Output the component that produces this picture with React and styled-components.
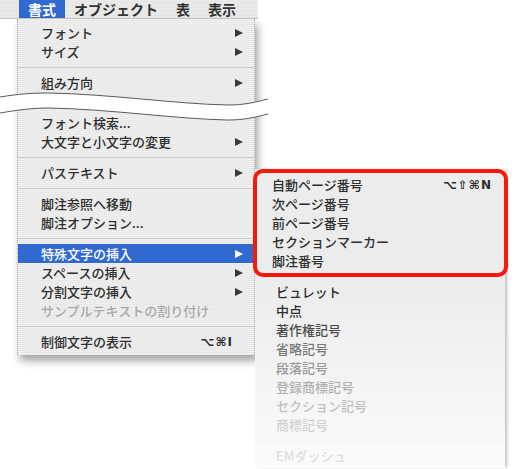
import React from "react";
import styled, { createGlobalStyle } from "styled-components";

const GlobalStyle = createGlobalStyle`
  html, body {
    margin: 0;
    padding: 0;
    background: #fff;
  }
  body {
    font-family: "Noto Sans CJK JP", "Noto Sans", sans-serif;
    color: #2e2e2e;
  }
`;

const barItems = ["書式", "オブジェクト", "表", "表示"];

const mainTop = [
  { label: "フォント", arrow: true },
  { label: "サイズ", arrow: true },
  { sep: true },
  { label: "組み方向", arrow: true },
];

const mainBottom = [
  { label: "フォント検索..." },
  { label: "大文字と小文字の変更", arrow: true },
  { sep: true },
  { label: "パステキスト", arrow: true },
  { sep: true },
  { label: "脚注参照へ移動" },
  { label: "脚注オプション..." },
  { sep: true },
  { label: "特殊文字の挿入", arrow: true, active: true },
  { label: "スペースの挿入", arrow: true },
  { label: "分割文字の挿入", arrow: true },
  { label: "サンプルテキストの割り付け", disabled: true },
  { sep: true },
  { label: "制御文字の表示", shortcut: "⌥⌘I" },
];

const markedItems = [
  { label: "自動ページ番号", shortcut: "⌥⇧⌘N" },
  { label: "次ページ番号" },
  { label: "前ページ番号" },
  { label: "セクションマーカー" },
  { label: "脚注番号" },
];

const symbolItems = [
  { label: "ビュレット", fade: 1 },
  { label: "中点", fade: 1 },
  { label: "著作権記号", fade: 0.85 },
  { label: "省略記号", fade: 0.62 },
  { label: "段落記号", fade: 0.46 },
  { label: "登録商標記号", fade: 0.34 },
  { label: "セクション記号", fade: 0.27 },
  { label: "商標記号", fade: 0.19 },
  { sep: true, fade: 0.15 },
  { label: "EMダッシュ", fade: 0.13 },
];

const Page = styled.div`
  width: 519px;
  height: 469px;
  overflow: hidden;
  background: #fff;
`;

const MenuBar = styled.div`
  display: flex;
  width: 258px;
  height: 19px;
  padding-left: 19px;
  box-sizing: border-box;
  background: repeating-linear-gradient(to bottom, #ececec 0 1px, #e4e4e4 1px 2px);
  border-bottom: 1px solid #c9c9c9;
`;

const BarItem = styled.div`
  padding: 0 9px;
  font-size: 14px;
  font-weight: 700;
  line-height: 19px;
  color: ${(p) => (p.$active ? "#fff" : "#333")};
  background: ${(p) => (p.$active ? "#3069cf" : "transparent")};
`;

const Stage = styled.div`
  display: flex;
  align-items: flex-start;
`;

const MainMenu = styled.div`
  position: relative;
  margin-left: 17px;
  width: 238px;
  padding: 4px 0;
  box-sizing: border-box;
  background: repeating-linear-gradient(to bottom, #efefef 0 1px, #e8e8e8 1px 2px);
  border-left: 1px dotted #a8a8a8;
  border-right: 1px dotted #a8a8a8;
  box-shadow: 3px 6px 8px rgba(0, 0, 0, 0.35);
`;

const Row = styled.div`
  display: flex;
  align-items: center;
  height: 19px;
  padding: 0 11px 0 23px;
  font-size: 13px;
  font-weight: 500;
  white-space: nowrap;
  color: ${(p) => (p.$active ? "#fff" : p.$disabled ? "#a9a9a9" : "#2e2e2e")};
  background: ${(p) => (p.$active ? "#3069cf" : "transparent")};
`;

const Label = styled.span`
  flex: 1;
`;

const Shortcut = styled.span`
  font-family: "DejaVu Sans", "Liberation Sans", sans-serif;
  font-size: 12px;
  font-weight: 700;
  letter-spacing: 1px;
  margin-right: ${(p) => (p.$inset ? "10px" : "0")};
`;

const Arrow = styled.span`
  width: 0;
  height: 0;
  border-top: 4.5px solid transparent;
  border-bottom: 4.5px solid transparent;
  border-left: 8px solid ${(p) => (p.$active ? "#fff" : "#3a3a3a")};
`;

const Separator = styled.div`
  height: 12px;
  display: flex;
  align-items: center;
  opacity: ${(p) => p.$fade ?? 1};
  &::after {
    content: "";
    flex: 1;
    height: 1px;
    background: #cdcdcd;
  }
`;

const CutGap = styled.div`
  position: relative;
  height: 21px;
`;

const Wave = styled.svg`
  position: absolute;
  left: -18px;
  top: -2px;
  overflow: visible;
`;

const Submenu = styled.div`
  position: relative;
  z-index: 2;
  margin-top: 150px;
  width: 250px;
  height: 299px;
  background: linear-gradient(to bottom, #ececec 0, #ececec 110px, #fbfbfb 100%);
  box-shadow: 3px 0 3px -1px rgba(0, 0, 0, 0.25);
`;

const Marked = styled.div`
  margin: 0 -3px 5px -2px;
  padding: 2px 0 3px;
  border: 4px solid #f5190a;
  border-radius: 10px;
`;

const SubRow = styled.div`
  display: flex;
  align-items: center;
  height: 19px;
  padding: ${(p) => (p.$boxed ? "0 12px 0 15px" : "0 13px 0 21px")};
  font-size: 13px;
  font-weight: 500;
  white-space: nowrap;
  color: #2e2e2e;
  opacity: ${(p) => p.$fade ?? 1};
`;

const SubSeparator = styled(Separator)`
  &::after {
    background: #e2e2e2;
  }
`;

function MenuRows({ items }) {
  return items.map((it, i) =>
    it.sep ? (
      <Separator key={i} />
    ) : (
      <Row key={i} $active={it.active} $disabled={it.disabled}>
        <Label>{it.label}</Label>
        {it.shortcut && <Shortcut $inset>{it.shortcut}</Shortcut>}
        {it.arrow && <Arrow $active={it.active} />}
      </Row>
    )
  );
}

function CutMark() {
  const top = "M0 101 C18 98 32 97 48 97 C110 98 175 108 228 109 C245 109 256 106 268 103";
  const bottom = "M0 117 C18 114 32 112 48 112 C110 113 175 123 228 124 C245 124 256 121 268 118";
  const band =
    "M0 101 C18 98 32 97 48 97 C110 98 175 108 228 109 C245 109 256 106 268 103 L268 118 C256 121 245 124 228 124 C175 123 110 113 48 112 C32 112 18 114 0 117 Z";
  return (
    <Wave width="270" height="34" viewBox="0 94 270 34">
      <path d={band} fill="#fff" />
      <path d={top} fill="none" stroke="#5a5a5a" strokeWidth="1" />
      <path d={bottom} fill="none" stroke="#5a5a5a" strokeWidth="1" />
    </Wave>
  );
}

export default function App() {
  return (
    <Page>
      <GlobalStyle />
      <MenuBar>
        {barItems.map((b, i) => (
          <BarItem key={b} $active={i === 0}>
            {b}
          </BarItem>
        ))}
      </MenuBar>
      <Stage>
        <MainMenu>
          <MenuRows items={mainTop} />
          <CutGap>
            <CutMark />
          </CutGap>
          <MenuRows items={mainBottom} />
        </MainMenu>
        <Submenu>
          <Marked>
            {markedItems.map((it) => (
              <SubRow key={it.label} $boxed>
                <Label>{it.label}</Label>
                {it.shortcut && <Shortcut>{it.shortcut}</Shortcut>}
              </SubRow>
            ))}
          </Marked>
          {symbolItems.map((it, i) =>
            it.sep ? (
              <SubSeparator key={i} $fade={it.fade} />
            ) : (
              <SubRow key={i} $fade={it.fade}>
                <Label>{it.label}</Label>
              </SubRow>
            )
          )}
        </Submenu>
      </Stage>
    </Page>
  );
}
